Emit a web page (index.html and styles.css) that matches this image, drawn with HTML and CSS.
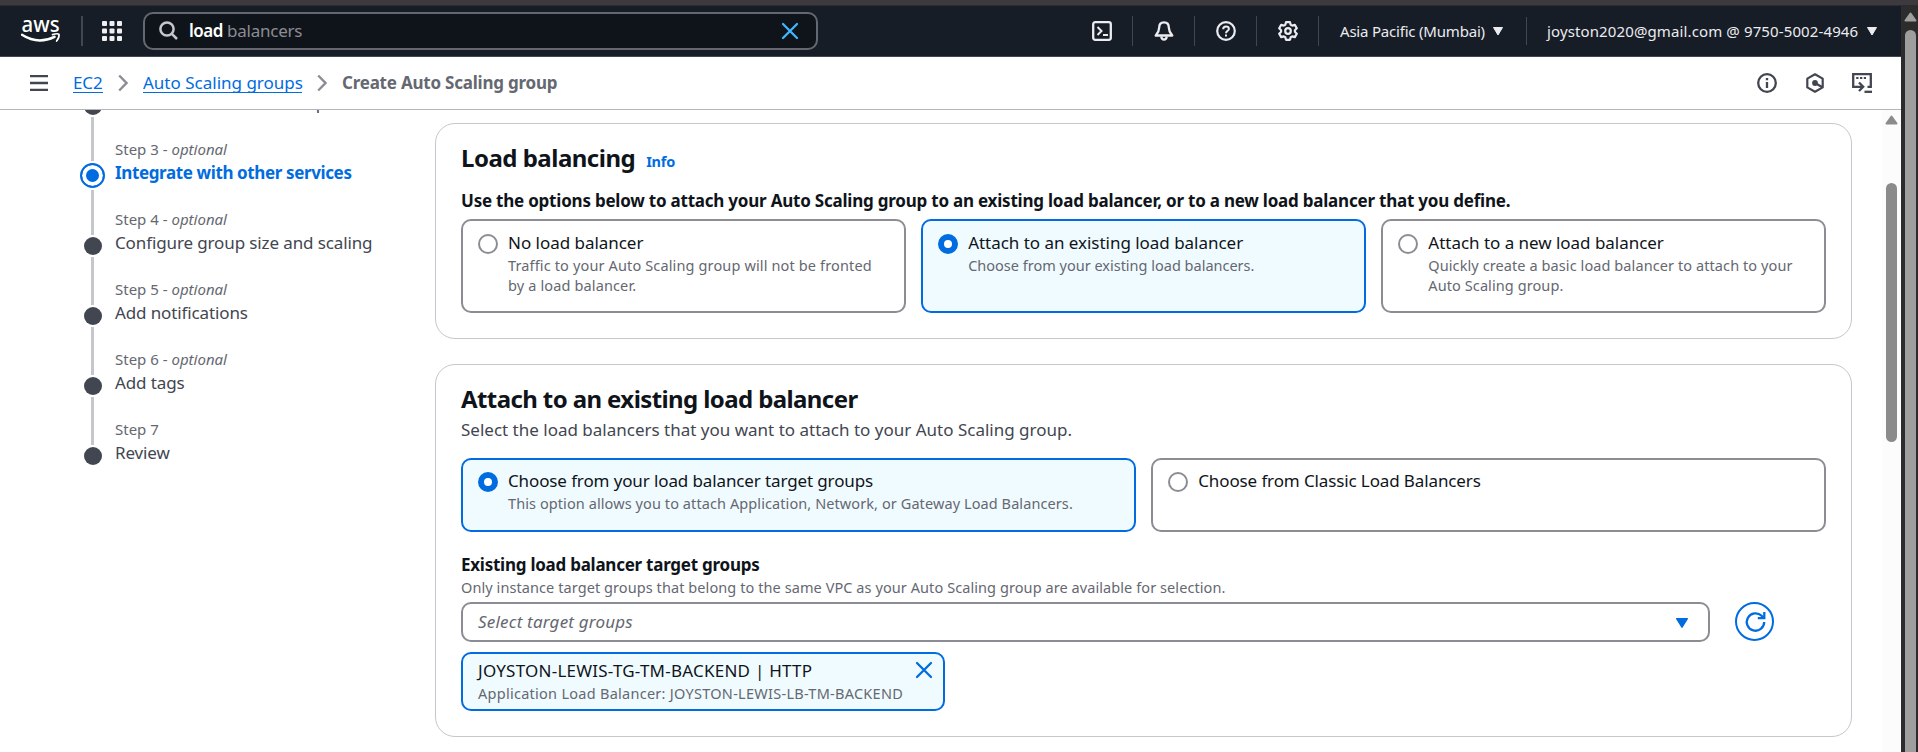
FILE: index.html
```
<!DOCTYPE html>
<html lang="en">
<head>
<meta charset="utf-8">
<title>Create Auto Scaling group</title>
<link rel="stylesheet" href="styles.css">
</head>
<body>
<div class="window-edge"></div>
<div class="frame">
  <div class="console">
    <header class="topbar">
      <svg class="logo" width="40" height="44" viewBox="0 0 40 44">
        <text class="logo-text" x="0.6" y="22.5" textLength="38" lengthAdjust="spacingAndGlyphs">aws</text>
        <path d="M1 25.800Q17 36 33.500 27.800" fill="none" stroke="#fff" stroke-width="2.500" stroke-linecap="round"/>
        <path d="M31.500 25.600Q36.500 24 38 25.300Q38.500 28.500 35.600 32" fill="none" stroke="#fff" stroke-width="1.700" stroke-linecap="round"/>
      </svg>
      <span class="sep sep-logo"></span>
      <svg class="apps" width="20" height="20" viewBox="0 0 20 20" fill="#f0f0f2">
        <rect x="0" y="0" width="5" height="5" rx="1"/><rect x="7.500" y="0" width="5" height="5" rx="1"/><rect x="15" y="0" width="5" height="5" rx="1"/>
        <rect x="0" y="7.500" width="5" height="5" rx="1"/><rect x="7.500" y="7.500" width="5" height="5" rx="1"/><rect x="15" y="7.500" width="5" height="5" rx="1"/>
        <rect x="0" y="15" width="5" height="5" rx="1"/><rect x="7.500" y="15" width="5" height="5" rx="1"/><rect x="15" y="15" width="5" height="5" rx="1"/>
      </svg>
      <div class="search">
        <svg width="20" height="20" viewBox="0 0 20 20" fill="none" stroke="#c6c6cd" stroke-width="2.500"><circle cx="8" cy="8" r="6.600"/><path d="M12.600 12.600L18 18"/></svg>
        <span class="query"><span class="typed">load</span> balancers</span>
        <svg class="clear" width="18" height="18" viewBox="0 0 18 18" fill="none" stroke="#42b4ff" stroke-width="2.300" stroke-linecap="round"><path d="M2 2L16 16M16 2L2 16"/></svg>
      </div>
      <div class="tools">
        <span class="tool"><svg width="20" height="20" viewBox="0 0 20 20" fill="none" stroke="#ebebf0" stroke-width="2.300" stroke-linejoin="round"><rect x="1.200" y="1.200" width="17.600" height="17.600" rx="2"/><path d="M5.500 6L9.500 10L5.500 14M11 14H16" stroke-linejoin="miter" stroke-width="2"/></svg></span>
        <span class="tool"><svg width="20" height="20" viewBox="0 0 20 20" fill="none" stroke="#ebebf0" stroke-width="2.300" stroke-linejoin="round"><path d="M10 1.300C6.500 1.300 5.200 3.800 5.200 6.500C5.200 10.300 4.300 11.300 1.700 14.500H18.300C15.700 11.300 14.800 10.300 14.800 6.500C14.800 3.800 13.500 1.300 10 1.300Z"/><path d="M7.200 15.500Q7.700 18.600 10 18.600T12.800 15.500"/></svg></span>
        <span class="tool"><svg width="20" height="20" viewBox="0 0 20 20" fill="none" stroke="#ebebf0" stroke-width="2.200"><circle cx="10" cy="10" r="8.800"/><path d="M7.200 8.200C7.200 6.300 8.400 5.500 10 5.500S12.900 6.400 12.900 7.900C12.900 9.800 10 9.800 10 12.300M10 13.400V15.500" stroke-width="2"/></svg></span>
        <span class="tool"><svg width="20" height="20" viewBox="0 0 20 20" fill="none" stroke="#ebebf0" stroke-width="2.200" stroke-linejoin="round"><path d="M8 1.200H12L12.700 3.800L14.200 4.600L16.800 3.900L18.800 7.300L16.900 9.200V10.800L18.800 12.700L16.800 16.100L14.200 15.400L12.700 16.200L12 18.800H8L7.300 16.200L5.800 15.400L3.200 16.100L1.200 12.700L3.100 10.800V9.200L1.200 7.300L3.200 3.900L5.800 4.600L7.300 3.800Z"/><circle cx="10" cy="10" r="2.800"/></svg></span>
      </div>
      <div class="region"><span class="t-region">Asia Pacific (Mumbai)</span><svg width="10" height="9" viewBox="0 0 10 9"><path d="M.5.500H9.500L5 8Z" fill="#ebebf0" stroke="#ebebf0" stroke-linejoin="round"/></svg></div>
      <div class="account"><span class="t-account">joyston2020@gmail.com @ 9750-5002-4946</span><svg width="10" height="9" viewBox="0 0 10 9"><path d="M.5.500H9.500L5 8Z" fill="#ebebf0" stroke="#ebebf0" stroke-linejoin="round"/></svg></div>
    </header>

    <nav class="crumbs">
      <svg class="menu" width="18" height="16" viewBox="0 0 18 16"><path d="M0 1.200H18M0 8H18M0 14.800H18" stroke="#424650" stroke-width="2.300"/></svg>
      <a class="crumb c-ec2">EC2</a>
      <svg class="chev" width="10" height="18" viewBox="0 0 10 18"><path d="M1.200 1.500L8.500 9L1.200 16.500" fill="none" stroke="#8c8c94" stroke-width="2.400"/></svg>
      <a class="crumb c-asg">Auto Scaling groups</a>
      <svg class="chev" width="10" height="18" viewBox="0 0 10 18"><path d="M1.200 1.500L8.500 9L1.200 16.500" fill="none" stroke="#8c8c94" stroke-width="2.400"/></svg>
      <span class="current">Create Auto Scaling group</span>
      <div class="crumb-tools">
        <svg width="20" height="20" viewBox="0 0 20 20" fill="none" stroke="#424650" stroke-width="2.300"><circle cx="10" cy="10" r="8.800"/><path d="M10 9V15M10 5V7.300"/></svg>
        <svg width="20" height="20" viewBox="0 0 20 20" fill="none" stroke="#424650" stroke-width="2.200"><path d="M10 1.300L17.700 5.600V14.400L10 18.700L2.300 14.400V5.600Z" stroke-linejoin="round"/><circle cx="10" cy="10" r="2.900" fill="#424650" stroke="none"/><path d="M10 10L17 14"/></svg>
        <svg width="20" height="20" viewBox="0 0 20 20" fill="none" stroke="#424650" stroke-width="2.300"><path d="M5 13.800H1.200V1.200H18.800V13.800H15.500"/><path d="M4.200 5H6.500M8 5H10.300M11.800 5H14" stroke-width="2"/><path d="M4.500 13.800H11M7 9.500L11.200 13.800L7 18"/><path d="M12.500 18.800H20"/></svg>
      </div>
    </nav>

    <div class="workspace">
      <ol class="steps">
        <li class="step clipped"><span class="rail"><i class="dot"></i><i class="line grow"></i></span><span class="label"><b class="name">Choose instance launch options</b></span></li>
        <li class="step active"><span class="rail"><i class="line head"></i><i class="dot"></i><i class="line grow"></i></span><span class="label"><small>Step 3 - <em>optional</em></small><b class="name">Integrate with other services</b></span></li>
        <li class="step"><span class="rail"><i class="line head"></i><i class="dot"></i><i class="line grow"></i></span><span class="label"><small>Step 4 - <em>optional</em></small><b class="name">Configure group size and scaling</b></span></li>
        <li class="step"><span class="rail"><i class="line head"></i><i class="dot"></i><i class="line grow"></i></span><span class="label"><small>Step 5 - <em>optional</em></small><b class="name">Add notifications</b></span></li>
        <li class="step"><span class="rail"><i class="line head"></i><i class="dot"></i><i class="line grow"></i></span><span class="label"><small>Step 6 - <em>optional</em></small><b class="name">Add tags</b></span></li>
        <li class="step"><span class="rail"><i class="line head"></i><i class="dot"></i></span><span class="label"><small>Step 7</small><b class="name">Review</b></span></li>
      </ol>

      <main class="panels">
        <section class="panel first">
          <div class="title-row"><h2 class="h-lb">Load balancing</h2><a class="info">Info</a></div>
          <p class="bold lead">Use the options below to attach your Auto Scaling group to an existing load balancer, or to a new load balancer that you define.</p>
          <div class="tiles three">
            <label class="tile"><i class="radio"></i><span><span class="opt">No load balancer</span><span class="desc loose">Traffic to your Auto Scaling group will not be fronted<br>by a load balancer.</span></span></label>
            <label class="tile on"><i class="radio"></i><span><span class="opt">Attach to an existing load balancer</span><span class="desc plain">Choose from your existing load balancers.</span></span></label>
            <label class="tile"><i class="radio"></i><span><span class="opt">Attach to a new load balancer</span><span class="desc">Quickly create a basic load balancer to attach to your<br>Auto Scaling group.</span></span></label>
          </div>
        </section>

        <section class="panel second">
          <h2 class="h-attach">Attach to an existing load balancer</h2>
          <p class="sub">Select the load balancers that you want to attach to your Auto Scaling group.</p>
          <div class="tiles two">
            <label class="tile on"><i class="radio"></i><span><span class="opt">Choose from your load balancer target groups</span><span class="desc">This option allows you to attach Application, Network, or Gateway Load Balancers.</span></span></label>
            <label class="tile"><i class="radio"></i><span><span class="opt">Choose from Classic Load Balancers</span></span></label>
          </div>
          <p class="bold field">Existing load balancer target groups</p>
          <p class="hint">Only instance target groups that belong to the same VPC as your Auto Scaling group are available for selection.</p>
          <div class="select-row">
            <div class="select"><em>Select target groups</em><svg width="14" height="12" viewBox="0 0 14 12"><path d="M1.700 1.700H12.300L7 10.200Z" fill="#006ce0" stroke="#006ce0" stroke-width="1.500" stroke-linejoin="round"/></svg></div>
            <div class="refresh"><svg width="22" height="22" viewBox="0 0 22 22" fill="none" stroke="#006ce0" stroke-width="2.300"><path d="M20.200 11A8.700 8.700 0 1 1 17.600 4.800L19.800 7"/><path d="M20.300 1V7.200H13.800"/></svg></div>
          </div>
          <div class="token">
            <span><span class="opt t-token">JOYSTON-LEWIS-TG-TM-BACKEND | HTTP</span><span class="desc t-lb">Application Load Balancer: JOYSTON-LEWIS-LB-TM-BACKEND</span></span>
            <svg width="18" height="18" viewBox="0 0 18 18" fill="none" stroke="#006ce0" stroke-width="2.300" stroke-linecap="round"><path d="M2 2L16 16M16 2L2 16"/></svg>
          </div>
        </section>
      </main>

      <div class="inner-scroll"><svg width="13" height="10" viewBox="0 0 13 10"><path d="M6.500 1.500L11.500 8.500H1.500Z" fill="#8b8b8b" stroke="#8b8b8b" stroke-width="2" stroke-linejoin="round"/></svg><i></i></div>
    </div>
  </div>
  <div class="outer-scroll"><svg width="13" height="10" viewBox="0 0 13 10"><path d="M6.500 1.500L11.500 8.500H1.500Z" fill="#9e9e9e" stroke="#9e9e9e" stroke-width="2" stroke-linejoin="round"/></svg><i></i></div>
</div>
</body>
</html>
```
FILE: styles.css
```
* { box-sizing: border-box; }
body {
  margin: 0; height: 752px; overflow: hidden; background: #fff; color: #0f141a;
  font: 17px/25px "Noto Sans", "Open Sans", sans-serif;
  display: flex; flex-direction: column; white-space: nowrap;
}
h2, p, ol { margin: 0; padding: 0; }
svg { display: block; flex: none; }
.window-edge { height: 6px; background: #3c3a3f; border-bottom: 1px solid #2c2c30; flex: none; }
.frame { flex: 1; display: flex; min-height: 0; }
.console { width: 1901px; display: flex; flex-direction: column; }

.topbar { height: 51px; background: #161d26; border-bottom: 1px solid #424650; display: flex; align-items: center; padding: 0 24px 0 21px; flex: none; }
.logo { margin-top: -1px; }
.logo-text { font: 500 21px "Noto Sans", sans-serif; fill: #fff; }
.sep { width: 2px; height: 30px; background: #424650; }
.sep-logo { margin-left: 20px; }
.apps { margin-left: 19px; }
.search { margin-left: 21px; width: 675px; height: 38px; border: 2px solid #656871; border-radius: 10px; background: #0f141a; display: flex; align-items: center; padding: 0 17px 0 14px; }
.query { margin-left: 10px; margin-top: -1px; color: #8c8c94; font-size: 17px; letter-spacing: -.25px; }
.typed { color: #fff; font-weight: 600; letter-spacing: -.5px; }
.clear { margin-left: auto; }
.tools { display: flex; margin-left: auto; }
.tool { width: 62px; height: 30px; border-right: 1px solid #424650; display: flex; align-items: center; justify-content: center; }
.region, .account { display: flex; align-items: center; height: 28px; color: #ebebf0; font-size: 15px; }
.region { width: 208px; padding-left: 21px; gap: 8px; border-right: 1px solid #424650; }
.t-region { width: 145px; letter-spacing: -.2px; }
.account { width: 350px; padding-left: 20px; gap: 8px; }
.t-account { width: 312px; letter-spacing: .12px; }

.crumbs { height: 53px; border-bottom: 1px solid #b4b4bb; display: flex; align-items: center; padding: 0 29px 0 30px; flex: none; }
.crumb { color: #006ce0; border-bottom: 1px solid #006ce0; line-height: 19px; height: 20px; margin-top: -1px; }
.c-ec2 { margin-left: 25px; width: 30px; letter-spacing: -.1px; }
.chev { margin: 0 15px 0 15px; }
.c-asg { width: 159px; }
.current { font-weight: 700; color: #656871; margin-top: -2px; letter-spacing: -.22px; }
.crumb-tools { margin-left: auto; display: flex; gap: 27.500px; }

.workspace { flex: 1; display: flex; min-height: 0; overflow: hidden; }
.steps { width: 435px; padding-left: 80px; list-style: none; flex: none; }
.step { height: 70px; display: flex; gap: 10px; }
.step.clipped { height: 46px; margin-top: -17px; }
.rail { width: 25px; display: flex; flex-direction: column; align-items: center; }
.line { width: 3px; background: #c6c6cd; }
.head { height: 26px; margin-bottom: 2px; }
.grow { flex: 1; margin-top: 2px; }
.dot { width: 18px; height: 18px; border-radius: 50%; background: #424650; flex: none; }
.clipped .dot { margin-top: 4px; }
.active .head { height: 22px; }
.active .dot { width: 25px; height: 25px; border: 2.500px solid #006ce0; background: #006ce0; box-shadow: inset 0 0 0 4px #fff; }
.label { display: flex; flex-direction: column; }
.label small { font-size: 15px; line-height: 20px; color: #656871; }
.name { font-weight: 400; color: #424650; line-height: 28px; letter-spacing: -.12px; }
.clipped .name { margin-top: -4px; }
.active .name { font-weight: 700; color: #006ce0; letter-spacing: -.38px; }

.panels { width: 1417px; padding-top: 13px; }
.panel { border: 1px solid #c6c6cd; border-radius: 20px; padding: 0 25px; }
.first { height: 216px; }
.second { height: 373px; margin-top: 25px; }
h2 { font-size: 24px; line-height: 30px; font-weight: 700; letter-spacing: -.6px; }
.title-row { display: flex; align-items: baseline; gap: 11px; padding-top: 19px; height: 50px; }
.title-row h2 { letter-spacing: -.5px; }
.info { color: #006ce0; font-weight: 700; font-size: 14.500px; letter-spacing: -.25px; }
.bold { font-weight: 700; letter-spacing: -.25px; }
.lead { margin-top: 14px; margin-bottom: 6px; letter-spacing: -.22px; }
.tiles { display: grid; gap: 15.500px; }
.three { grid-template-columns: 1fr 1fr 1fr; height: 94px; }
.two { grid-template-columns: 1fr 1fr; height: 74px; margin-top: 16px; }
.tile { border: 2px solid #8c8c94; border-radius: 10px; padding: 9px 15px; display: flex; gap: 10px; align-items: flex-start; }
.tile.on { border-color: #006ce0; background: #f0fbff; }
.radio { width: 20px; height: 20px; border-radius: 50%; border: 2px solid #8c8c94; background: #fff; margin-top: 4px; flex: none; }
.on .radio { border: 6px solid #006ce0; }
.opt, .desc { display: block; }
.opt { line-height: 25px; letter-spacing: -.03px; }
.desc { font-size: 14.500px; line-height: 20px; color: #656871; letter-spacing: .09px; }
.loose { letter-spacing: .14px; }
.plain { letter-spacing: 0; }
.two .tile { padding-top: 8px; }
.two .opt { letter-spacing: -.12px; }
.h-attach { padding-top: 19px; }
.sub { color: #424650; margin-top: 3px; }
.field { margin-top: 20px; }
.hint { font-size: 14.500px; line-height: 20px; color: #656871; letter-spacing: .08px; }
.select-row { display: flex; gap: 25px; margin-top: 5px; }
.select { width: 1249px; height: 40px; border: 2px solid #8c8c94; border-radius: 10px; display: flex; align-items: center; justify-content: space-between; padding: 0 19px 2px 15px; color: #656871; letter-spacing: .2px; }
.select svg { margin-top: 3px; }
.refresh { width: 39px; height: 39px; border: 2px solid #006ce0; border-radius: 50%; display: flex; align-items: center; justify-content: center; }
.token { width: 484px; height: 59px; margin-top: 10px; border: 2px solid #006ce0; border-radius: 10px; background: #f0fbff; display: flex; justify-content: space-between; padding: 4px 10px 0 15px; }
.token svg { margin-top: 3px; }
.t-token { letter-spacing: .24px; }
.t-lb { letter-spacing: .27px; }

.inner-scroll { margin-left: auto; width: 19px; background: #fcfcfc; padding: 5px 3px 0; }
.inner-scroll i { display: block; width: 11px; height: 259px; margin: 58px 0 0 1px; border-radius: 6px; background: #8b8b8b; }
.outer-scroll { width: 17px; background: #2c2c2c; padding: 6px 0 0 3px; }
.outer-scroll i { display: block; width: 11px; height: 740px; margin: 8px 0 0 1px; border-radius: 6px 6px 0 0; background: #9e9e9e; }
```
